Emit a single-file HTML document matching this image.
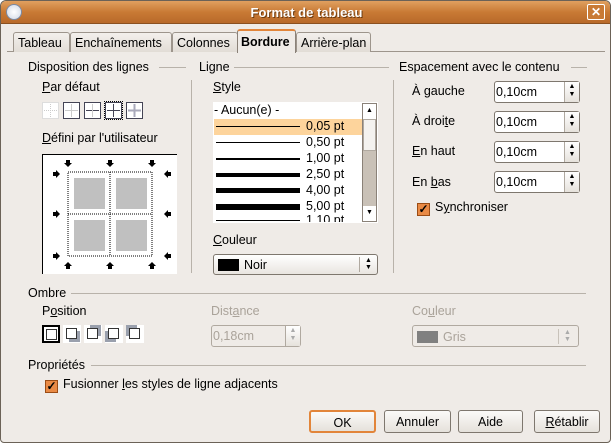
<!DOCTYPE html>
<html><head><meta charset="utf-8"><style>
*{margin:0;padding:0;box-sizing:border-box}
body{width:611px;height:443px;overflow:hidden;background:#fff;font-family:"Liberation Sans",sans-serif;font-size:12.5px;color:#000}
#win{position:absolute;left:0;top:0;width:611px;height:443px;background:#efebe7;border:1px solid #6b6257;border-radius:6px 6px 4px 4px;overflow:hidden}
#title{position:absolute;left:0;top:0;width:611px;height:23px;background:linear-gradient(#e0a060,#c97a35 50%,#b8692a);border-bottom:1px solid #8a5020}
#title .t{position:absolute;left:0;width:611px;text-align:center;top:4px;color:#fff;font-weight:bold;font-size:13px;text-shadow:1px 1px 0 #6a3a10}
.a{position:absolute;white-space:nowrap}
.tab{position:absolute;top:31px;height:20px;border:1px solid #9d958c;border-bottom:none;border-radius:3px 3px 0 0;background:linear-gradient(#f3f0ec,#e2ddd6);padding:3px 0 0 4px;white-space:nowrap;overflow:hidden}
.line{position:absolute;height:1px;background:#b8b2aa}
.vline{position:absolute;width:1px;background:#b8b2aa}
.u{text-decoration:underline}
.spin{position:absolute;width:86px;height:22px;border:1px solid #7e776e;border-radius:3px;background:#fff;padding:3px 0 0 1px}
.spin .b{position:absolute;right:0;top:0;width:15px;height:20px;border-left:1px solid #b0a9a0;background:linear-gradient(#fff,#e6e2dc);font-size:7px;line-height:8px;text-align:center;padding-top:1px}
.chk{position:absolute;width:13px;height:13px;background:#e98a45;border:1px solid #9b4c15;font-size:12px;line-height:11px;text-align:center;font-weight:bold}
.btn{position:absolute;top:409px;height:23px;border:1px solid #7e776e;border-radius:3px;background:linear-gradient(#fbfaf8,#e5e1db);text-align:center;padding-top:4px}
.ic{position:absolute;width:17px;height:17px;background:#fff;border:1px solid #ccc}
.sw{position:absolute;top:324px;width:18px;height:18px;background:#fff}
.sw i{position:absolute;left:3px;top:3px;width:11px;height:11px;border:1px solid #333;background:#fff}
.row{position:absolute;left:213px;width:148px;height:16px}
.row b{position:absolute;left:2px;width:84px;background:#000}
.row span{position:absolute;left:92px;top:0}
</style></head><body><div id="win">
<div id="title"><div class="t">Format de tableau</div>
<div style="position:absolute;left:5px;top:3px;width:16px;height:16px;border-radius:50%;background:radial-gradient(#fff,#cfd7e5);border:1px solid #7a8aa5"></div>
<div style="position:absolute;left:586px;top:3px;width:18px;height:16px;border:1px solid #fff;border-radius:2px;background:#c97a35;color:#fff;font-weight:bold;font-size:12px;text-align:center;line-height:14px">✕</div>
</div>
<div style="position:absolute;left:6px;top:50px;width:598px;height:350px;border-top:1px solid #9d958c"></div>
<div class="tab" style="left:12px;width:57px">Tableau</div>
<div class="tab" style="left:69px;width:102px">Enchaînements</div>
<div class="tab" style="left:171px;width:66px">Colonnes</div>
<div class="tab" style="left:236px;top:28px;height:24px;width:59px;background:#efebe7;font-weight:bold;border-color:#8a8178;padding:4px 0 0 3px;border-top:2px solid #e2853a">Bordure</div>
<div class="tab" style="left:295px;width:75px">Arrière-plan</div>

<div class="a" style="left:27px;top:59px">Disposition des lignes</div><div class="line" style="left:158px;top:66px;width:27px"></div>
<div class="a" style="left:198px;top:59px">Ligne</div><div class="line" style="left:233px;top:66px;width:155px"></div>
<div class="a" style="left:398px;top:59px">Espacement avec le contenu</div><div class="line" style="left:570px;top:66px;width:16px"></div>
<div class="vline" style="left:190px;top:79px;height:193px"></div>
<div class="vline" style="left:392px;top:79px;height:193px"></div>

<div class="a" style="left:41px;top:79px"><span class="u">P</span>ar défaut</div>
<div class="ic" style="left:41px;top:101px;border-color:#ddd"><svg width="15" height="15"><path d="M7.5 1v13M1 7.5h13" stroke="#ccc" stroke-dasharray="1 1"/></svg></div>
<div class="ic" style="left:62px;top:101px;border-color:#445"><svg width="15" height="15"><path d="M7.5 1v13M1 7.5h13" stroke="#ccc"/></svg></div>
<div class="ic" style="left:83px;top:101px;border-color:#445"><svg width="15" height="15"><path d="M1 7.5h13" stroke="#445"/><path d="M7.5 1v13" stroke="#ccc"/></svg></div>
<div class="ic" style="left:104px;top:101px;border-color:#445;outline:1px dotted #000"><svg width="15" height="15"><path d="M7.5 1v13M1 7.5h13" stroke="#445"/></svg></div>
<div class="ic" style="left:125px;top:101px;border-color:#445"><svg width="15" height="15"><path d="M7.5 1v13M1 7.5h13" stroke="#aab" stroke-width="2"/></svg></div>
<div class="a" style="left:41px;top:130px"><span class="u">D</span>éfini par l'utilisateur</div>
<div style="position:absolute;left:41px;top:153px;width:135px;height:120px;background:#fff;border-left:1px solid #000;border-top:1px solid #000">
<svg width="134" height="119" style="position:absolute;left:0;top:0">
<rect x="25" y="17" width="84" height="84" fill="none" stroke="#000" stroke-dasharray="1 1"/>
<path d="M67 17v84M25 59h84" stroke="#000" stroke-dasharray="1 1"/>
<rect x="31" y="23" width="31" height="31" fill="#c0c0c0"/><rect x="73" y="23" width="31" height="31" fill="#c0c0c0"/>
<rect x="31" y="65" width="31" height="31" fill="#c0c0c0"/><rect x="73" y="65" width="31" height="31" fill="#c0c0c0"/>
<g fill="#000">
<path d="M23 5h4v3h2l-4 4-4-4h2z"/><path d="M65 5h4v3h2l-4 4-4-4h2z"/><path d="M107 5h4v3h2l-4 4-4-4h2z"/>
<path d="M23 114h4v-3h2l-4-4-4 4h2z"/><path d="M65 114h4v-3h2l-4-4-4 4h2z"/><path d="M107 114h4v-3h2l-4-4-4 4h2z"/>
<path d="M10 17h3v-2l4 4-4 4v-2h-3z"/><path d="M10 57h3v-2l4 4-4 4v-2h-3z"/><path d="M10 99h3v-2l4 4-4 4v-2h-3z"/>
<path d="M128 17h-3v-2l-4 4 4 4v-2h3z"/><path d="M128 57h-3v-2l-4 4 4 4v-2h3z"/><path d="M128 99h-3v-2l-4 4 4 4v-2h3z"/>
</g></svg></div>

<div class="a" style="left:212px;top:79px"><span class="u">S</span>tyle</div>
<div style="position:absolute;left:212px;top:101px;width:165px;height:121px;background:#fff;overflow:hidden">
<div class="a" style="left:1px;top:1px">- Aucun(e) -</div>
</div>
<div class="row" style="top:118px;background:#fdd49c"><b style="top:7px;height:1px"></b><span>0,05 pt</span></div>
<div class="row" style="top:134px"><b style="top:7px;height:1px"></b><span>0,50 pt</span></div>
<div class="row" style="top:150px"><b style="top:7px;height:2px"></b><span>1,00 pt</span></div>
<div class="row" style="top:166px"><b style="top:6px;height:4px"></b><span>2,50 pt</span></div>
<div class="row" style="top:182px"><b style="top:5px;height:5px"></b><span>4,00 pt</span></div>
<div class="row" style="top:198px"><b style="top:5px;height:6px"></b><span>5,00 pt</span></div>
<div class="row" style="top:214px;height:7px;overflow:hidden"><b style="top:5px;height:1px"></b><span style="top:-2px">1,10 pt</span></div>
<div style="position:absolute;left:361px;top:102px;width:15px;height:119px;background:#c9c1b7;border:1px solid #8a8178">
<div style="height:15px;background:#fff;font-size:7px;text-align:center;line-height:14px">▲</div>
<div style="height:32px;background:#f4f2ef;border:1px solid #b0a9a0"></div>
<div style="position:absolute;bottom:0;width:13px;height:15px;background:#fff;font-size:7px;text-align:center;line-height:14px">▼</div>
</div>
<div class="a" style="left:212px;top:232px"><span class="u">C</span>ouleur</div>
<div style="position:absolute;left:212px;top:253px;width:165px;height:21px;border:1px solid #7e776e;border-radius:3px;background:linear-gradient(#fff,#e9e5e0)">
<div style="position:absolute;left:4px;top:4px;width:21px;height:12px;background:#000"></div>
<div class="a" style="left:30px;top:3px">Noir</div>
<div style="position:absolute;right:0;top:2px;width:18px;height:15px;border-left:1px solid #b0a9a0;font-size:7px;line-height:7px;text-align:center">▲<br>▼</div>
</div>

<div class="a" style="left:411px;top:83px">À <span class="u">g</span>auche</div>
<div class="a" style="left:411px;top:113px">À droi<span class="u">t</span>e</div>
<div class="a" style="left:411px;top:143px"><span class="u">E</span>n haut</div>
<div class="a" style="left:411px;top:174px">En <span class="u">b</span>as</div>
<div class="spin" style="left:493px;top:80px">0,10cm<div class="b">▲<br>▼</div></div>
<div class="spin" style="left:493px;top:110px">0,10cm<div class="b">▲<br>▼</div></div>
<div class="spin" style="left:493px;top:140px">0,10cm<div class="b">▲<br>▼</div></div>
<div class="spin" style="left:493px;top:170px">0,10cm<div class="b">▲<br>▼</div></div>
<div class="chk" style="left:416px;top:202px">✓</div>
<div class="a" style="left:434px;top:199px">S<span class="u">y</span>nchroniser</div>

<div class="a" style="left:27px;top:285px">Ombre</div><div class="line" style="left:70px;top:292px;width:515px"></div>
<div class="a" style="left:41px;top:303px">P<span class="u">o</span>sition</div>
<div class="sw" style="left:41px;border:2px solid #000"><i style="left:2px;top:2px"></i></div>
<div class="sw" style="left:62px"><div style="position:absolute;left:6px;top:6px;width:11px;height:11px;background:#9aa0ad"></div><i></i></div>
<div class="sw" style="left:83px"><div style="position:absolute;left:6px;top:0;width:11px;height:11px;background:#9aa0ad"></div><i></i></div>
<div class="sw" style="left:104px"><div style="position:absolute;left:0;top:6px;width:11px;height:11px;background:#9aa0ad"></div><i></i></div>
<div class="sw" style="left:125px"><div style="position:absolute;left:0;top:0;width:11px;height:11px;background:#9aa0ad"></div><i></i></div>
<div class="a" style="left:210px;top:303px;color:#aaa39a">Dist<span class="u">a</span>nce</div>
<div class="spin" style="left:210px;top:324px;width:90px;background:#efebe7;color:#aaa39a;border-color:#b0a9a0">0,18cm<div class="b" style="color:#aaa">▲<br>▼</div></div>
<div class="a" style="left:411px;top:303px;color:#aaa39a">Co<span class="u">u</span>leur</div>
<div style="position:absolute;left:411px;top:324px;width:167px;height:22px;border:1px solid #b0a9a0;border-radius:3px;background:#efebe7">
<div style="position:absolute;left:4px;top:5px;width:21px;height:12px;background:#808080"></div>
<div class="a" style="left:30px;top:4px;color:#aaa39a">Gris</div>
<div style="position:absolute;right:2px;top:3px;width:18px;height:15px;border-left:1px solid #c8c2ba;font-size:7px;line-height:7px;text-align:center;color:#aaa">▲<br>▼</div>
</div>

<div class="a" style="left:27px;top:357px">Propriétés</div><div class="line" style="left:90px;top:364px;width:495px"></div>
<div class="chk" style="left:44px;top:379px">✓</div>
<div class="a" style="left:62px;top:376px">Fusionner <span class="u">l</span>es styles de ligne adjacents</div>

<div class="btn" style="left:308px;width:67px;border:2px solid #e2853a">OK</div>
<div class="btn" style="left:383px;width:67px">Annuler</div>
<div class="btn" style="left:457px;width:65px">Aide</div>
<div class="btn" style="left:533px;width:66px"><span class="u">R</span>établir</div>
</div></body></html>
